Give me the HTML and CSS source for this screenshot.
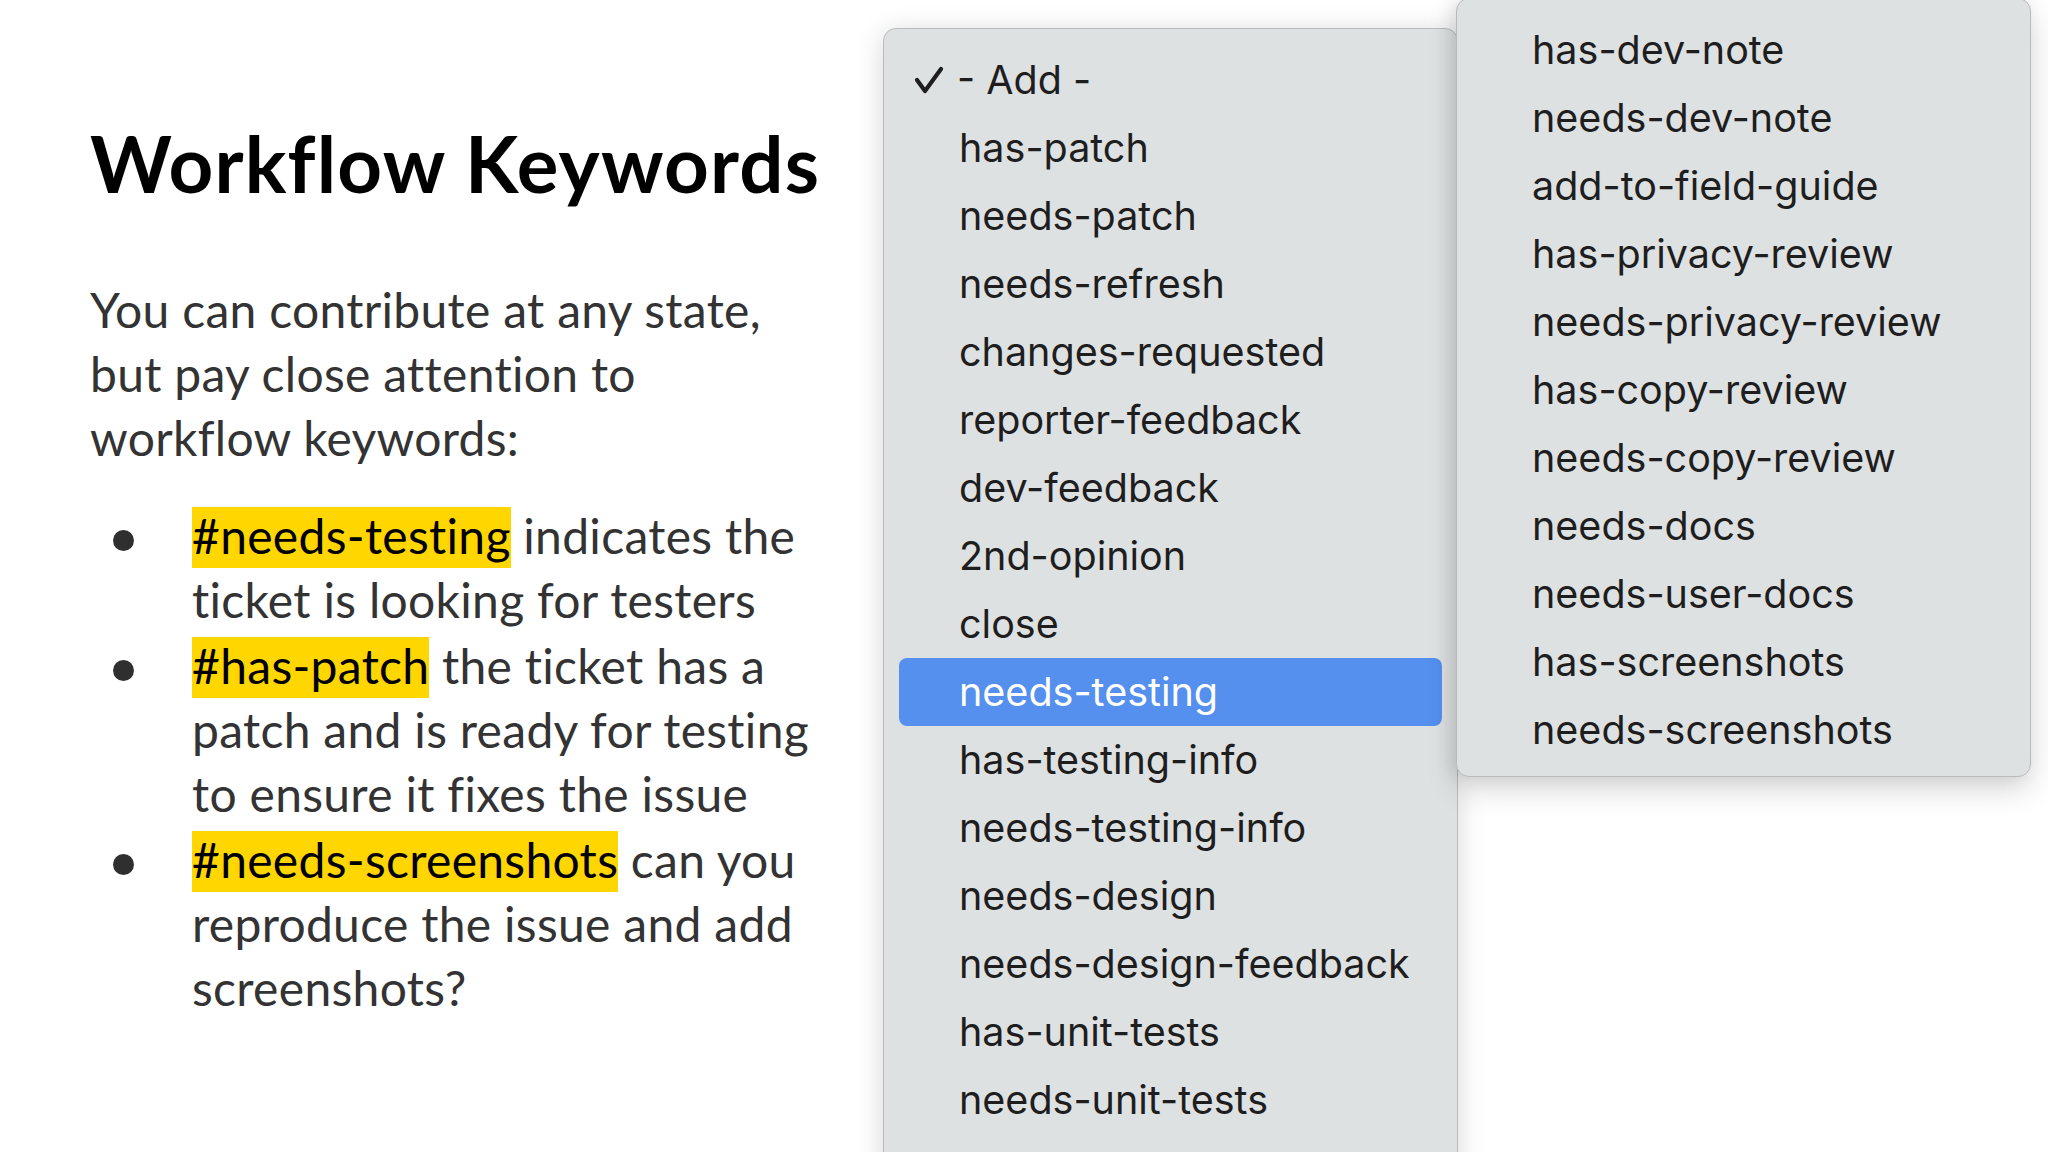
FILE: index.html
```html
<!DOCTYPE html>
<html lang="en">
<head>
    <meta charset="UTF-8">
    <title>Workflow Keywords</title>
    <link rel="stylesheet" href="styles.css">
</head>
<body>
    <main class="slide">
        <section class="slide-text">
            <h1>Workflow Keywords</h1>
            <p class="intro">You can contribute at any state, but pay close attention to workflow keywords:</p>
            <ul class="keywords">
                <li><div><span class="hl">#needs-testing</span> indicates the ticket is looking for testers</div></li>
                <li><div><span class="hl">#has-patch</span> the ticket has a patch and is ready for testing to ensure it fixes the issue</div></li>
                <li><div><span class="hl">#needs-screenshots</span> can you reproduce the issue and add screenshots?</div></li>
            </ul>
        </section>

        <!-- keyword popup, first column -->
        <div class="menu menu-main">
            <div class="menu-item checked">
                <svg class="check" viewBox="0 0 30 30" width="30" height="30">
                    <path d="M3 15 L11 26 L27 4" fill="none" stroke="#1e1e1e" stroke-width="4.2" stroke-linecap="round" stroke-linejoin="round"/>
                </svg>
                - Add -
            </div>
            <div class="menu-item">has-patch</div>
            <div class="menu-item">needs-patch</div>
            <div class="menu-item">needs-refresh</div>
            <div class="menu-item">changes-requested</div>
            <div class="menu-item">reporter-feedback</div>
            <div class="menu-item">dev-feedback</div>
            <div class="menu-item">2nd-opinion</div>
            <div class="menu-item">close</div>
            <div class="menu-item active">needs-testing</div>
            <div class="menu-item">has-testing-info</div>
            <div class="menu-item">needs-testing-info</div>
            <div class="menu-item">needs-design</div>
            <div class="menu-item">needs-design-feedback</div>
            <div class="menu-item">has-unit-tests</div>
            <div class="menu-item">needs-unit-tests</div>
            <div class="menu-item">has-dev-note</div>
        </div>

        <!-- second column -->
        <div class="menu menu-more">
            <div class="menu-item">has-dev-note</div>
            <div class="menu-item">needs-dev-note</div>
            <div class="menu-item">add-to-field-guide</div>
            <div class="menu-item">has-privacy-review</div>
            <div class="menu-item">needs-privacy-review</div>
            <div class="menu-item">has-copy-review</div>
            <div class="menu-item">needs-copy-review</div>
            <div class="menu-item">needs-docs</div>
            <div class="menu-item">needs-user-docs</div>
            <div class="menu-item">has-screenshots</div>
            <div class="menu-item">needs-screenshots</div>
        </div>
    </main>
</body>
</html>
```

FILE: styles.css
```css
html, body {
    margin: 0;
    padding: 0;
    background: #fff;
}

body {
    width: 2048px;
    height: 1152px;
    overflow: hidden;
}

.slide {
    position: relative;
    width: 2048px;
    height: 1152px;
    overflow: hidden;
}

.slide-text {
    padding: 124px 0 0 90px;
    width: 760px;
    font-family: Lato, "Liberation Sans", sans-serif;
    color: #333;
}

h1 {
    margin: 0;
    font-size: 78px;
    line-height: 78px;
    font-weight: 700;
    color: #000;
    letter-spacing: 1.2px;
    white-space: nowrap;
}

.intro {
    margin: 76px 0 0;
    width: 720px;
    font-size: 48px;
    line-height: 64px;
    letter-spacing: 0.3px;
}

.keywords {
    list-style: none;
    margin: 34px 0 0;
    padding: 0;
    font-size: 48px;
    line-height: 64px;
    letter-spacing: 0.3px;
}

.keywords li {
    display: grid;
    grid-template-columns: 102px 640px;
}

.keywords li + li {
    margin-top: 2px;
}

.keywords li::before {
    content: "";
    width: 21px;
    height: 21px;
    margin: 26px 0 0 23px;
    border-radius: 50%;
    background: #2f2f2f;
}

.hl {
    background: #ffd600;
    color: #000;
    padding: 0 0 4px;
}

/* popup menus */
.menu {
    position: absolute;
    box-sizing: border-box;
    width: 575px;
    background: #dee1e2;
    border: 1px solid #b9bbbc;
    border-radius: 13px;
    font-family: Inter, "Noto Sans", sans-serif;
    font-size: 39.5px;
    color: #1e1e1e;
}

.menu-main {
    left: 883px;
    top: 28px;
    height: 1300px;
    padding: 17px 0;
    box-shadow: 0 4px 28px rgba(0, 0, 0, 0.16);
}

.menu-more {
    left: 1456px;
    top: -2px;
    padding: 17px 0 12px;
    box-shadow: 0 12px 30px rgba(0, 0, 0, 0.16), -6px 0 18px rgba(0, 0, 0, 0.08);
}

.menu-item {
    display: flex;
    align-items: center;
    height: 68px;
    margin: 0 15px;
    padding-left: 60px;
    border-radius: 8px;
    white-space: nowrap;
}

.menu-item.checked {
    padding-left: 15px;
    gap: 13px;
}

.menu-item.active {
    background: #5590ee;
    color: #fff;
}

.check {
    flex: none;
}
```
